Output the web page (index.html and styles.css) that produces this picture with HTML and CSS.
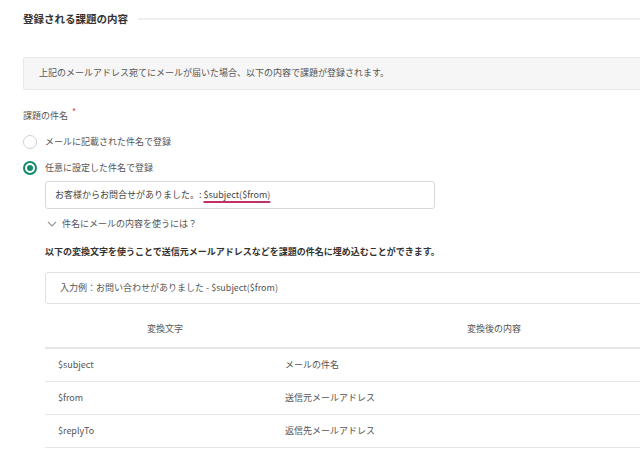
FILE: index.html
```html
<!DOCTYPE html>
<html lang="ja">
<head>
<meta charset="utf-8">
<link rel="stylesheet" href="styles.css">
</head>
<body>
<div class="page">
  <div class="section-head">
    <h2 class="section-title">登録される課題の内容</h2>
    <div class="section-rule"></div>
  </div>

  <div class="info-box">上記のメールアドレス宛てにメールが届いた場合、以下の内容で課題が登録されます。</div>

  <div class="field-label">課題の件名<span class="req">*</span></div>

  <div class="radio-row">
    <span class="radio"></span>
    <span class="radio-text">メールに記載された件名で登録</span>
  </div>
  <div class="radio-row">
    <span class="radio checked"></span>
    <span class="radio-text">任意に設定した件名で登録</span>
  </div>

  <div class="sub">
    <div class="text-input">お客様からお問合せがありました。: <span class="var-mark">$subject($from)</span></div>

    <div class="toggle">
      <svg class="chev" width="10" height="6" viewBox="0 0 10 6"><path d="M1 1l4 4 4-4" fill="none" stroke="#999" stroke-width="1.2"/></svg>
      <span>件名にメールの内容を使うには？</span>
    </div>

    <p class="lead">以下の変換文字を使うことで送信元メールアドレスなどを課題の件名に埋め込むことができます。</p>

    <div class="example">入力例：お問い合わせがありました - $subject($from)</div>

    <div class="vars">
      <div class="vars-head">
        <div class="th th1">変換文字</div>
        <div class="th th2">変換後の内容</div>
      </div>
      <div class="vars-row">
        <div class="td td1">$subject</div>
        <div class="td">メールの件名</div>
      </div>
      <div class="vars-row">
        <div class="td td1">$from</div>
        <div class="td">送信元メールアドレス</div>
      </div>
      <div class="vars-row">
        <div class="td td1">$replyTo</div>
        <div class="td">返信先メールアドレス</div>
      </div>
    </div>
  </div>
</div>
</body>
</html>
```

FILE: styles.css
```css
html, body {
  margin: 0;
  padding: 0;
  background: #fff;
  overflow: hidden;
}
body {
  font-family: "Noto Sans CJK JP", "Noto Sans", sans-serif;
  font-size: 9px;
  color: #555;
  line-height: 1.4;
}
.page {
  width: 720px;
  padding: 12px 0 0 23px;
}
.section-head {
  display: flex;
  align-items: center;
  gap: 10px;
  height: 14px;
}
.section-title {
  margin: 0;
  font-size: 10.5px;
  font-weight: bold;
  color: #333;
  white-space: nowrap;
}
.section-rule {
  flex: 1;
  height: 2px;
  background: #eeeeee;
}
.info-box {
  margin-top: 31px;
  height: 31px;
  display: flex;
  align-items: center;
  padding-left: 15px;
  background: #f6f6f6;
  border: 1px solid #e8e8e8;
  border-radius: 2px;
  color: #555;
}
.field-label {
  margin-top: 19px;
  height: 14px;
  display: flex;
  align-items: center;
  color: #555;
}
.req {
  color: #e0483e;
  font-size: 9px;
  margin-left: 4px;
  position: relative;
  top: -4px;
}
.radio-row {
  display: flex;
  align-items: center;
  gap: 8px;
  margin-top: 12px;
  height: 14px;
}
.radio {
  box-sizing: border-box;
  width: 14px;
  height: 14px;
  border-radius: 50%;
  border: 1.5px solid #d0d0d0;
  background: #fff;
  flex: none;
}
.radio.checked {
  border: 2px solid #138a6c;
  position: relative;
}
.radio.checked::after {
  content: "";
  position: absolute;
  left: 2px;
  top: 2px;
  width: 6px;
  height: 6px;
  border-radius: 50%;
  background: #138a6c;
}
.radio-text {
  color: #555;
}
.sub {
  padding-left: 22px;
}
.text-input {
  box-sizing: border-box;
  margin-top: 6px;
  width: 390px;
  height: 28px;
  border: 1px solid #d8d8d8;
  border-radius: 3px;
  display: flex;
  align-items: center;
  padding-left: 9px;
  color: #444;
  white-space: pre;
}
.var-mark {
  text-decoration: underline;
  text-decoration-color: #c0306a;
  text-decoration-thickness: 2px;
  text-underline-offset: 3px;
}
.toggle {
  display: flex;
  align-items: center;
  gap: 5px;
  margin-top: 8px;
  height: 14px;
  padding-left: 2px;
  color: #555;
}
.chev {
  flex: none;
}
.lead {
  margin: 14px 0 0;
  font-weight: bold;
  color: #333;
  height: 14px;
  line-height: 14px;
}
.example {
  box-sizing: border-box;
  margin-top: 13px;
  height: 32px;
  border: 1px solid #e2e2e2;
  border-radius: 3px;
  display: flex;
  align-items: center;
  padding-left: 14px;
  color: #555;
}
.vars {
  margin-top: 17px;
}
.vars-head {
  display: flex;
  height: 17px;
  align-items: center;
  padding-bottom: 9px;
  border-bottom: 2px solid #e6e6e6;
}
.th {
  color: #555;
  text-align: center;
}
.th1 {
  width: 240px;
}
.th2 {
  width: 418px;
}
.vars-row {
  display: flex;
  align-items: center;
  height: 32px;
  border-bottom: 1px solid #e6e6e6;
}
.td {
  color: #555;
}
.td1 {
  width: 240px;
  padding-left: 13px;
  box-sizing: border-box;
}
```
